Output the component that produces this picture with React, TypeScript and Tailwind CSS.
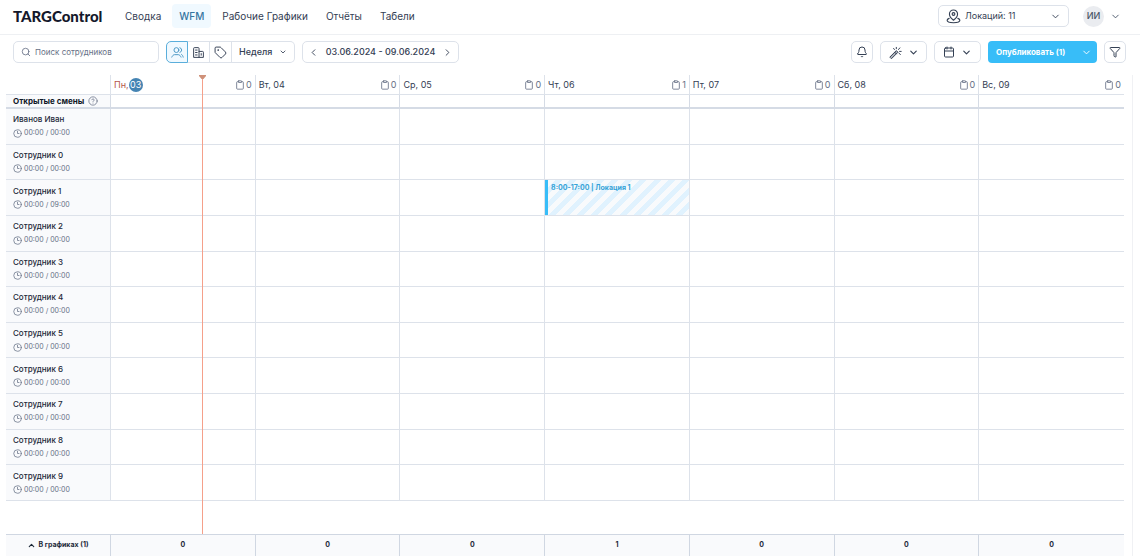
import { useState } from 'react';
import type { ReactNode } from 'react';
import { Bell, Calendar, ChevronDown, ChevronLeft, ChevronRight, ChevronUp, CircleHelp, Clipboard, Clock3, Funnel, Search, Tag } from 'lucide-react';

const navItems = ['Сводка', 'WFM', 'Рабочие Графики', 'Отчёты', 'Табели'];

const days = [
  { name: 'Пн', date: '03', count: 0, today: true },
  { name: 'Вт', date: '04', count: 0 },
  { name: 'Ср', date: '05', count: 0 },
  { name: 'Чт', date: '06', count: 1 },
  { name: 'Пт', date: '07', count: 0 },
  { name: 'Сб', date: '08', count: 0 },
  { name: 'Вс', date: '09', count: 0 },
];

type Shift = { day: number; label: string };

const employees: { name: string; hours: string; shift?: Shift }[] = [
  { name: 'Иванов Иван', hours: '00:00 / 00:00' },
  { name: 'Сотрудник 0', hours: '00:00 / 00:00' },
  { name: 'Сотрудник 1', hours: '00:00 / 09:00', shift: { day: 3, label: '8:00-17:00 | Локация 1' } },
  { name: 'Сотрудник 2', hours: '00:00 / 00:00' },
  { name: 'Сотрудник 3', hours: '00:00 / 00:00' },
  { name: 'Сотрудник 4', hours: '00:00 / 00:00' },
  { name: 'Сотрудник 5', hours: '00:00 / 00:00' },
  { name: 'Сотрудник 6', hours: '00:00 / 00:00' },
  { name: 'Сотрудник 7', hours: '00:00 / 00:00' },
  { name: 'Сотрудник 8', hours: '00:00 / 00:00' },
  { name: 'Сотрудник 9', hours: '00:00 / 00:00' },
];

function Icon({ size, children }: { size: number; children: ReactNode }) {
  return (
    <svg width={size} height={size} viewBox="0 0 24 24" fill="none" stroke="currentColor" strokeWidth="1.8" strokeLinecap="round" strokeLinejoin="round" className="shrink-0" aria-hidden="true">
      {children}
    </svg>
  );
}

function UsersIcon() {
  return (
    <Icon size={13}>
      <circle cx="10" cy="7.5" r="4.5" />
      <path d="M16.5 3.2a4.5 4.5 0 0 1 0 8.6" />
      <path d="M1.5 20.5c1.2-2.8 3-4.500 5-4.500h7c2 0 3.800 1.700 5 4.500" />
      <path d="M19.500 15.500c1.400.8 2.400 2.500 3 5" />
    </Icon>
  );
}

function BuildingIcon() {
  return (
    <Icon size={13}>
      <path d="M13 21V4.500A1.500 1.500 0 0 0 11.500 3h-7A1.500 1.500 0 0 0 3 4.500V21h18v-9.500a1.500 1.500 0 0 0-1.500-1.500H13" />
      <path d="M6.500 7.500h3M6.500 12h3M6.500 16.500h3M17 14v3" />
    </Icon>
  );
}

function PinIcon() {
  return (
    <Icon size={15}>
      <path d="M12 18s6.500-4.800 6.500-10a6.500 6.500 0 0 0-13 0c0 5.200 6.500 10 6.500 10Z" />
      <circle cx="12" cy="8" r="2.200" />
      <path d="M5 15c-2 .8-3.200 1.800-3.200 3C1.800 20.400 6.500 22 12 22s10.200-1.600 10.200-4c0-1.200-1.200-2.200-3.200-3" />
    </Icon>
  );
}

function WandIcon() {
  return (
    <Icon size={13}>
      <path d="M2 20 13.500 8.500l3 3L5 23Z" fill="currentColor" fillOpacity="0.4" />
      <path d="m10.500 11.500 3 3M13.500 2.500v2.500M8.500 4.500l1.500 2M17.500 6.500l2.500-3M19.500 10h3M18.500 13.500l2.500 2" />
    </Icon>
  );
}

const box = 'flex h-[22px] items-center rounded-[5px] border border-[#dde2ea] bg-white text-[#344054]';

export default function App() {
  const [view, setView] = useState('people');

  // share of Monday that has already passed
  const dayProgress = 0.63;
  const nowLeft = `calc(105px + (100% - 105px) / 7 * ${dayProgress})`;

  const views = [
    { id: 'people', label: 'Сотрудники', icon: <UsersIcon /> },
    { id: 'places', label: 'Локации', icon: <BuildingIcon /> },
    { id: 'tags', label: 'Метки', icon: <Tag size={13} strokeWidth={1.8} /> },
  ];

  return (
    <div className="flex min-h-screen flex-col bg-white font-[Inter,sans-serif] text-[#344054]">
      <header className="flex h-[35px] items-center border-b border-[#eef0f3] pr-[19px] pl-[13px]">
        <a href="#" className="w-24 pb-0.5 font-[Lato,sans-serif] text-[15px] leading-5 font-black text-[#14182b]">TARGControl</a>
        <nav className="ml-[9px] flex items-center gap-1 pb-0.5">
          {navItems.map((item) => (
            <a key={item} href="#" className={`flex h-6 items-center rounded-[4px] px-[7px] text-[10px] whitespace-nowrap ${item === 'WFM' ? 'bg-[#f0f9ff] font-medium text-[#36769f]' : ''}`}>{item}</a>
          ))}
        </nav>
        <div className="ml-auto flex items-center pb-0.5">
          <label className={`${box} w-[131px] gap-1 px-[7px]`}>
            <PinIcon />
            <select aria-label="Локации" className="min-w-0 flex-1 appearance-none bg-transparent text-[9px] outline-none">
              <option>Локаций: 11</option>
            </select>
            <ChevronDown size={11} strokeWidth={2} />
          </label>
          <button className="ml-[14px] flex items-center gap-1.5 text-[9px] font-medium text-[#475467]">
            <span className="flex size-[21px] items-center justify-center rounded-full bg-[#eaecf0]">ИИ</span>
            <ChevronDown size={11} strokeWidth={2} />
          </button>
        </div>
      </header>

      <div className="flex items-center pt-[6px] pr-[14px] pb-3 pl-[13px]">
        <label className={`${box} w-[146px] gap-1 px-[7px]`}>
          <Search size={10} strokeWidth={2} className="shrink-0 text-[#667085]" />
          <input type="search" aria-label="Поиск сотрудников" placeholder="Поиск сотрудников" className="min-w-0 flex-1 text-[8px] outline-none placeholder:text-[#667085]" />
        </label>

        <div className="ml-[7px] flex h-[22px] items-center rounded-[5px] text-[#344054]">
          {views.map((v) => (
            <button key={v.id} aria-label={v.label} onClick={() => setView(v.id)} className={`flex h-[22px] w-[22px] items-center justify-center first:rounded-l-[5px] ${view === v.id ? 'border border-[#5aaedb] bg-[#f0f9ff] text-[#4a97c4]' : 'border-y border-r border-[#dde2ea]'}`}>
              {v.icon}
            </button>
          ))}
          <label className="flex h-[22px] w-[63px] items-center justify-between rounded-r-[5px] border-y border-r border-[#dde2ea] px-[7px]">
            <select aria-label="Период" className="appearance-none bg-transparent text-[9px] font-medium outline-none">
              <option>Неделя</option>
            </select>
            <ChevronDown size={8} strokeWidth={2.5} />
          </label>
        </div>

        <div className={`${box} ml-[7px] w-[157px] justify-between px-[5px]`}>
          <button aria-label="Назад"><ChevronLeft size={11} strokeWidth={2} /></button>
          <span className="text-[9px] font-medium">03.06.2024 - 09.06.2024</span>
          <button aria-label="Вперёд"><ChevronRight size={11} strokeWidth={2} /></button>
        </div>

        <div className="ml-auto flex gap-[7px]">
          <button aria-label="Уведомления" className={`${box} w-[22px] justify-center`}><Bell size={12} strokeWidth={2} /></button>
          <button aria-label="Автозаполнение" className={`${box} w-[47px] justify-center gap-1.5`}><WandIcon /><ChevronDown size={11} strokeWidth={2.5} /></button>
          <button aria-label="Календарь" className={`${box} w-[47px] justify-center gap-1.5`}><Calendar size={12} strokeWidth={2} /><ChevronDown size={11} strokeWidth={2.5} /></button>
          <div className="flex h-[22px] w-[109px] items-center justify-between rounded-[4px] bg-[#38bdf8] pr-[5px] pl-2 text-white">
            <button className="text-[8px] font-bold">Опубликовать (1)</button>
            <button aria-label="Ещё"><ChevronDown size={11} strokeWidth={2} /></button>
          </div>
          <button aria-label="Фильтр" className={`${box} w-[22px] justify-center`}><Funnel size={12} strokeWidth={2} /></button>
        </div>
      </div>

      <main className="mr-[7px] mb-0.5 flex flex-1 flex-col border-r border-[#f0f1f4] pr-[8px] pl-[6px]">
        <div className="relative flex-1">
          <table className="h-[426px] w-full table-fixed border-separate border-spacing-0 text-left">
            <thead>
              <tr className="h-5">
                <th className="w-[105px] border-r border-b border-[#dde2ea] p-0" aria-label="Сотрудник" />
                {days.map((day) => (
                  <th key={day.date} className="border-r border-b border-[#dde2ea] px-[3px] py-0 text-[9px] leading-[14px] font-normal last:border-r-0">
                    <div className="flex items-center">
                      {day.today ? (
                        <>
                          <span className="text-[#b5564a]">{day.name},</span>
                          <span className="flex size-[14px] items-center justify-center rounded-full bg-[#4584b3] text-white">{day.date}</span>
                        </>
                      ) : (
                        <span>{day.name}, {day.date}</span>
                      )}
                      <span className="ml-auto flex items-center gap-px text-[#667085]">
                        <Clipboard size={10} strokeWidth={2} />
                        {day.count}
                      </span>
                    </div>
                  </th>
                ))}
              </tr>
            </thead>
            <tbody>
              <tr className="h-[14px]">
                <th className="border-r border-b-2 border-[#d5dbe5] bg-[#f9fafc] py-0 pr-0 pl-[7px] text-[8px] leading-3 font-bold text-[#101828]">
                  <span className="flex items-center gap-1 whitespace-nowrap">Открытые смены <CircleHelp size={10} strokeWidth={1.8} className="text-[#667085]" /></span>
                </th>
                {days.map((day) => (
                  <td key={day.date} className="border-r border-b-2 border-[#d5dbe5] p-0 last:border-r-0" />
                ))}
              </tr>
              {employees.map((employee) => (
                <tr key={employee.name}>
                  <th className="border-r border-b border-[#dde2ea] bg-[#f9fafc] py-0 pr-0 pl-[7px] font-normal">
                    <div className="text-[8px] leading-[14px] font-medium text-[#1d2939]">{employee.name}</div>
                    <div className="flex items-center gap-0.5 text-[7px] leading-[14px] text-[#667085]"><Clock3 size={9} strokeWidth={2} />{employee.hours}</div>
                  </th>
                  {days.map((day, i) => (
                    <td key={day.date} className="relative border-r border-b border-[#dde2ea] p-0 last:border-r-0">
                      {employee.shift?.day === i && (
                        <button className="absolute inset-0 flex items-start border-l-3 border-[#38bdf8] bg-[repeating-linear-gradient(135deg,#f8fafc_0px,#f8fafc_5px,#e0f2fe_5px,#e0f2fe_10px)] pt-[3px] pl-[3px] text-[7px] leading-[10px] font-bold whitespace-nowrap text-[#35a3d8]">
                          {employee.shift.label}
                        </button>
                      )}
                    </td>
                  ))}
                </tr>
              ))}
            </tbody>
          </table>

          <div className="absolute inset-y-0 w-px bg-[#f5a08a]" style={{ left: nowLeft }}>
            <svg width="7" height="4" viewBox="0 0 7 4" className="absolute top-0 -left-[3px] max-w-none" aria-hidden="true">
              <path d="M0 0h7v1L4.500 4h-2L0 1Z" fill="#cf9179" />
            </svg>
          </div>
        </div>

        <table className="w-full table-fixed border-separate border-spacing-0 bg-[#f9fafc] text-[7px] font-bold text-[#1d2939]">
          <tbody>
            <tr className="h-[22px]">
              <th className="w-[105px] border-t border-r border-[#d0d7e2] p-0">
                <button className="flex w-full items-center justify-center gap-0.5 font-bold"><ChevronUp size={9} strokeWidth={3} />В графиках (1)</button>
              </th>
              {days.map((day) => (
                <td key={day.date} className="border-t border-r border-[#d0d7e2] p-0 text-center last:border-r-0">{day.count}</td>
              ))}
            </tr>
          </tbody>
        </table>
      </main>
    </div>
  );
}
